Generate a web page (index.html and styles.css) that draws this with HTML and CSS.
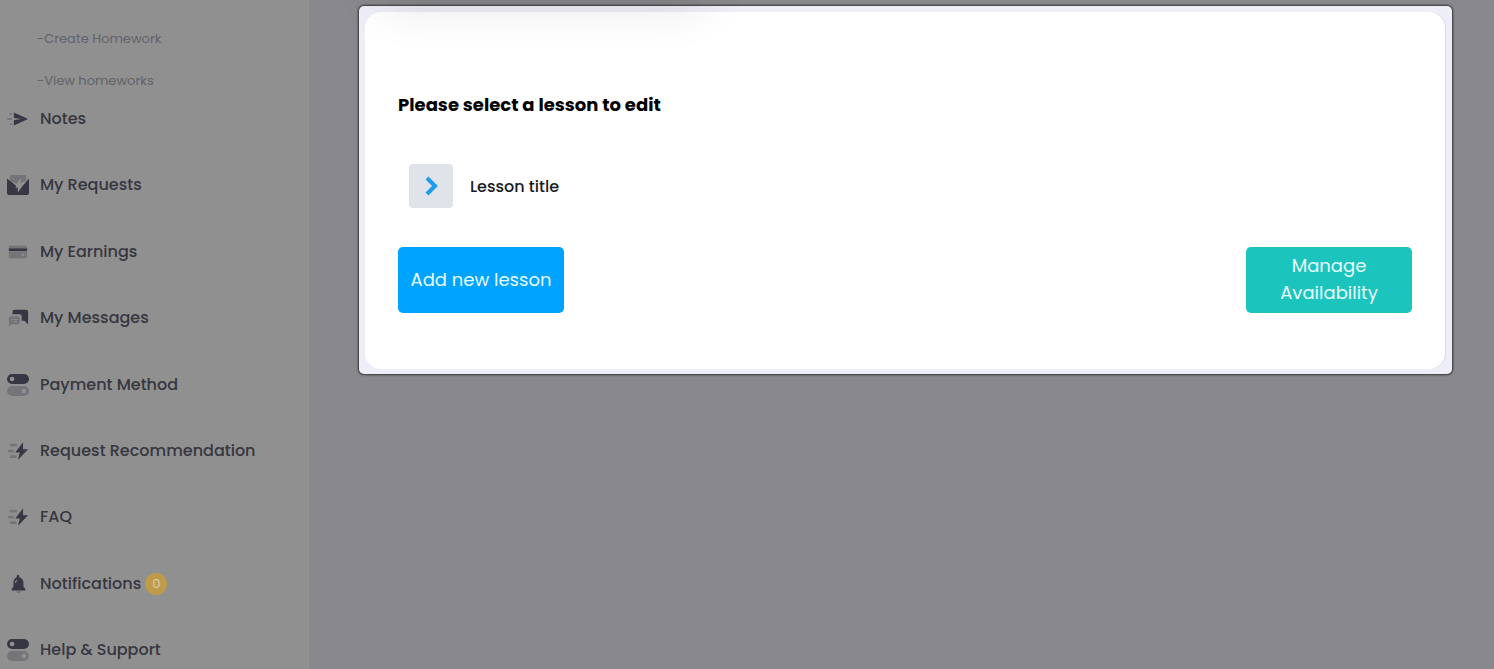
FILE: index.html
```
<!DOCTYPE html>
<html lang="en">
<head>
<meta charset="UTF-8">
<meta name="viewport" content="width=device-width, initial-scale=1.0">
<title>Lessons</title>
<link rel="stylesheet" href="styles.css">
</head>
<body>
<svg class="sprite" aria-hidden="true">
  <symbol id="i-bolt" viewBox="0 0 24 24">
    <path d="M17.500 2.500L9 13.500h5L12 21.500 23 10h-5.500z"/>
    <path class="soft" d="M4.500 4h6.500v3H4.500a1.500 1.500 0 0 1 0-3zM2.500 10.500h5v3h-5a1.500 1.500 0 0 1 0-3zM4.500 16.500h6v3h-6a1.500 1.500 0 0 1 0-3z"/>
  </symbol>
  <symbol id="i-toggles" viewBox="0 0 24 24">
    <path fill-rule="evenodd" d="M5.500 0h13a5.500 5.500 0 0 1 0 11h-13a5.500 5.500 0 0 1 0-11zM5.500 3a2.500 2.500 0 1 0 0 5 2.500 2.500 0 0 0 0-5z"/>
    <path class="soft" fill-rule="evenodd" d="M5.500 13h13a5.500 5.500 0 0 1 0 11h-13a5.500 5.500 0 0 1 0-11zM18.500 16a2.500 2.500 0 1 0 0 5 2.500 2.500 0 0 0 0-5z"/>
  </symbol>
</svg>

<aside class="sidebar">
  <div class="submenu">
    <a href="#">-Create Homework</a>
    <a href="#">-View homeworks</a>
  </div>
  <nav class="menu">
    <a href="#">
      <svg viewBox="0 0 24 24"><path d="M7.500 5L23 12 7.500 19V13l8-1-8-1z"/><path class="soft" d="M3 5.500h2.500v2H3zM.5 11h5v2h-5zM3 16.500h2.500v2H3z"/></svg>
      <span>Notes</span>
    </a>
    <a href="#">
      <svg viewBox="0 0 24 24"><path d="M0 5l9 7 1 1-1 1.500 2.500.5.500 5 5-7L24 5v16a2 2 0 0 1-2 2H2a2 2 0 0 1-2-2z"/><path class="soft" d="M3 7V3a2 2 0 0 1 2-2h14a2 2 0 0 1 2 2v4l-6 3V5l-5 6z"/></svg>
      <span>My Requests</span>
    </a>
    <a href="#">
      <svg viewBox="0 0 24 24"><path d="M2 8h20v3H2z"/><path class="soft" fill-rule="evenodd" d="M2 7.500Q2 5 4 5h16q2 0 2 2.500zM2 11.500h20V17q0 2-2 2H4q-2 0-2-2zM16 14v2h3v-2z"/></svg>
      <span>My Earnings</span>
    </a>
    <a href="#">
      <svg viewBox="0 0 24 24"><path d="M6 8V5a2 2 0 0 1 2-2h13a2 2 0 0 1 2 2v14l-4-4h-3v-5a2 2 0 0 0-2-2z"/><path class="soft" fill-rule="evenodd" d="M4 10h8a2 2 0 0 1 2 2v5a2 2 0 0 1-2 2H5l-3 2v-9a2 2 0 0 1 2-2zM5 13v1h6v-1zM8 15.500v1h3v-1z"/></svg>
      <span>My Messages</span>
    </a>
    <a href="#">
      <svg><use href="#i-toggles"/></svg>
      <span>Payment Method</span>
    </a>
    <a href="#">
      <svg><use href="#i-bolt"/></svg>
      <span>Request Recommendation</span>
    </a>
    <a href="#">
      <svg><use href="#i-bolt"/></svg>
      <span>FAQ</span>
    </a>
    <a href="#">
      <svg viewBox="0 0 24 24"><path fill-rule="evenodd" d="M12 2q1.500 0 1.500 2.500 4.500 1.500 4.500 6.500v4l2 2.500v1.500H5v-1.500L7 15v-4q0-5 3.500-6.500Q10.500 2 12 2zM11 7q-2.500 1-2.500 4l1.500-.5q0-2 1.500-2.500z"/><path class="soft" d="M10 19.500h5a2.500 2.500 0 0 1-5 0z"/></svg>
      <span>Notifications</span>
      <span class="badge">0</span>
    </a>
    <a href="#">
      <svg><use href="#i-toggles"/></svg>
      <span>Help &amp; Support</span>
    </a>
  </nav>
</aside>

<main>
  <section class="highlight">
    <div class="tour-tip"></div>
    <div class="card">
      <h1>Please select a lesson to edit</h1>
      <div class="lesson">
        <button class="open" id="openLesson" aria-labelledby="lessonTitle">
          <svg viewBox="0 0 24 24"><path d="M8 4l8 8-8 8"/></svg>
        </button>
        <label id="lessonTitle" for="openLesson">Lesson title</label>
      </div>
      <div class="actions">
        <button class="btn add">Add new lesson</button>
        <button class="btn manage">Manage Availability</button>
      </div>
    </div>
  </section>
</main>
</body>
</html>
```
FILE: styles.css
```
:root{
  --bg:#eeeef8; --surface:#fff; --text:#4a4c5c; --muted:#a4a4b2;
  --icon:#4c4a66; --blue:#00a3ff; --teal:#1bc5bd; --yellow:#bf9a48;
}
*{ box-sizing:border-box; margin:0; padding:0; }
body{
  display:flex; height:100vh; overflow:hidden; background:var(--bg); color:var(--text);
  font-family:'Poppins','Inter',sans-serif;
}
a{ color:inherit; text-decoration:none; }
button{ border:none; font-family:inherit; cursor:pointer; }
.sprite{ position:absolute; width:0; height:0; }

.sidebar{
  flex:0 0 309px; display:flex; flex-direction:column; gap:16px;
  padding:29px 7px 7px; background:var(--surface);
}
.submenu{ display:flex; flex-direction:column; gap:22px; padding-left:30px; font-size:13px; line-height:20px; color:var(--muted); }
.menu{ flex:1; display:flex; flex-direction:column; justify-content:space-between; }
.menu a{ display:flex; align-items:center; height:24px; font-size:16px; font-weight:500; line-height:24px; }
.menu svg{ width:22px; height:22px; margin-right:11px; fill:var(--icon); }
.soft{ opacity:.3; }
.badge{
  position:relative; z-index:2; width:22px; height:22px; margin-left:4px; border-radius:50%;
  background:var(--yellow); color:#d9cfae; font-size:13px; font-weight:400; line-height:22px; text-align:center;
}

main{ flex:1; padding:6px 42px 0 50px; }
/* everything outside the highlighted step is dimmed by the spread shadow */
.highlight{
  position:relative; z-index:1; padding:6px 7px 5px 6px; border-radius:5px; background:var(--bg);
  box-shadow:0 0 2px 1px rgba(33,33,33,.8), 0 0 0 5000px rgba(33,33,33,.5);
}
.tour-tip{
  position:absolute; left:26px; bottom:100%; width:315px; height:60px; margin-bottom:10px;
  box-shadow:0 3px 50px rgba(33,33,33,.17);
}
.card{
  padding:78px 33px 56px; border-radius:16px; background:var(--surface);
  box-shadow:1px 0 0 #dcdce8;
}
h1{ color:#000; font-size:18px; font-weight:700; line-height:30px; }
.lesson{ display:flex; align-items:center; gap:17px; margin:44px 0 39px 11px; color:#181c22; font-size:16px; font-weight:500; }
.open{ width:44px; height:44px; display:flex; align-items:center; justify-content:center; border-radius:4px; background:#e1e3ea; }
.open svg{ width:24px; height:24px; fill:none; stroke:#1b9cec; stroke-width:4; }
.actions{ display:flex; justify-content:space-between; }
.btn{ width:166px; height:66px; padding:0 12px 2px; border-radius:5px; color:#e8fbff; font-size:18px; font-weight:400; line-height:27px; }
.add{ background:var(--blue); }
.manage{ background:var(--teal); }
```
